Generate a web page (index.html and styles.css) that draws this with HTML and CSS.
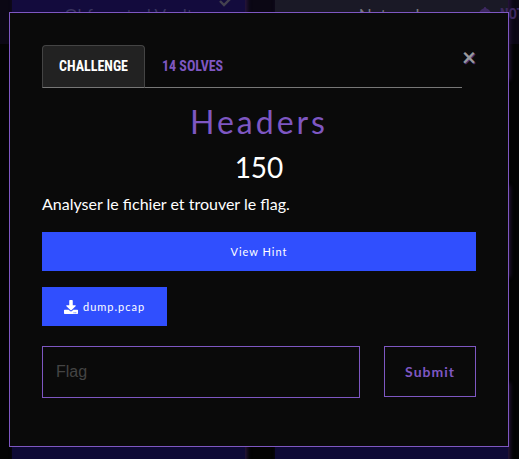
FILE: index.html
```html
<!DOCTYPE html>
<html lang="fr">
<head>
<meta charset="utf-8">
<meta name="viewport" content="width=device-width, initial-scale=1">
<title>Headers</title>
<link rel="stylesheet" href="styles.css">
</head>
<body>
<div class="board" aria-hidden="true">
  <div class="cards">
    <div class="card"><span>Obfuscated Vault</span></div>
    <div class="card card-muted"><span>Network</span></div>
    <div class="card"></div>
    <div class="card"></div>
    <div class="card"></div>
    <div class="card"></div>
  </div>
  <svg class="check" viewBox="0 0 12 8"><path d="M1 2l4 4 6-6" fill="none" stroke="currentColor" stroke-width="2.4"/></svg>
  <div class="notice"><svg viewBox="0 0 12 12"><path d="M5 1a1 1 0 0 1 2 0c2.500 1 4 2.500 4 5v3l1 1H0l1-1V6c0-2.500 1.500-4 4-5z" fill="currentColor"/></svg>NOT</div>
</div>
<main class="modal" role="dialog" aria-labelledby="title">
  <div class="top">
    <nav class="tabs">
      <a class="tab active" href="#challenge">CHALLENGE</a>
      <a class="tab" href="#solves">14 SOLVES</a>
    </nav>
    <button class="close" type="button" aria-label="Close">×</button>
  </div>
  <h1 class="title" id="title">Headers</h1>
  <p class="points">150</p>
  <p class="description">Analyser le fichier et trouver le flag.</p>
  <button class="button hint" type="button">View Hint</button>
  <a class="button file" href="#dump.pcap"><svg class="download" viewBox="0 0 512 512"><path fill="currentColor" d="M216 0h80c13 0 24 11 24 24v168h88c18 0 27 21 14 34L270 378c-7 7-20 7-27 0L90 226c-13-13-4-34 14-34h88V24c0-13 11-24 24-24zm296 376v112c0 13-11 24-24 24H24c-13 0-24-11-24-24V376c0-13 11-24 24-24h147l49 49c20 20 52 20 72 0l49-49h147c13 0 24 11 24 24zm-124 88a20 20 0 1 0-40 0 20 20 0 0 0 40 0zm64 0a20 20 0 1 0-40 0 20 20 0 0 0 40 0z"/></svg>dump.pcap</a>
  <form class="answer">
    <input class="flag" type="text" placeholder="Flag" aria-label="Flag">
    <button class="submit" type="submit">Submit</button>
  </form>
</main>
</body>
</html>
```
FILE: styles.css
```css
* { box-sizing: border-box; }
body {
  margin: 0;
  min-height: 100vh;
  background: #030303;
  color: #fff;
  font-family: Lato, "Liberation Sans", sans-serif;
  font-size: 16px;
  line-height: 24px;
}
.board {
  position: fixed;
  inset: 0;
  overflow: hidden;
  background: linear-gradient(#0b0714 44px, #030303 44px);
}
.cards {
  display: grid;
  grid-template-columns: 1fr 1fr;
  grid-auto-rows: 91px;
  gap: 106px 30px;
  margin: -11px 11px 0 12px;
}
.card {
  padding-top: 15px;
  background: #0e0a35;
  box-shadow: 2px 0 4px #2a1740;
  color: #3a3560;
  font-size: 17px;
  text-align: center;
}
.card:first-child { background: #130b3d; }
.card-muted { background: #1a1926; color: #77777d; }
.check {
  position: absolute;
  left: 219px;
  top: -1px;
  width: 12px;
  height: 8px;
  color: #44424f;
}
.notice {
  position: absolute;
  left: 478px;
  top: 2px;
  display: flex;
  align-items: center;
  gap: 8px;
  color: #3d2861;
  font: bold 14px/24px "Roboto Condensed", Roboto, sans-serif;
}
.notice svg { width: 14px; height: 16px; }
.modal {
  position: relative;
  margin: 12px 10px 12px 9px;
  padding: 32px 32px 48px;
  border: 1px solid #7e57c2;
  background: #0a0a0a;
}
.top { display: flex; align-items: flex-start; }
.tabs {
  display: flex;
  flex: 1;
  border-bottom: 1px solid #777;
}
.tab {
  margin-bottom: -1px;
  padding: 8px 16px;
  border: 1px solid transparent;
  border-radius: 4px 4px 0 0;
  color: #7e57c2;
  font: bold 14px/25px "Roboto Condensed", Roboto, sans-serif;
  text-decoration: none;
}
.tab.active {
  border-color: #444 #444 #777;
  background: #222;
  color: #fff;
}
.close {
  width: 14px;
  padding: 0;
  border: 0;
  background: none;
  color: #999;
  font: bold 24px/24px Lato, sans-serif;
  text-shadow: 1px 1px 0 #4a3278;
}
.title {
  margin: 16px 0 0;
  color: #7e57c2;
  font-size: 32px;
  font-weight: 400;
  line-height: 36px;
  letter-spacing: 3px;
  text-align: center;
}
.points {
  margin: 10px 0 8px;
  font-size: 28px;
  line-height: 34px;
  text-align: center;
}
.description { margin: 0 0 16px; }
.button {
  display: block;
  padding: 10px 22px;
  border: 0;
  background: #304ffe;
  color: #fff;
  font: 11px/19px Lato, sans-serif;
  letter-spacing: 1px;
  text-decoration: none;
}
.hint { width: 100%; margin-bottom: 16px; }
.file {
  display: flex;
  align-items: center;
  gap: 5px;
  width: max-content;
  margin-bottom: 20px;
}
.download { width: 14px; height: 14px; }
.answer { display: flex; align-items: flex-start; gap: 24px; }
.flag {
  flex: 1;
  min-width: 0;
  height: 52px;
  padding: 0 13px;
  border: 1px solid #7e57c2;
  border-radius: 0;
  background: transparent;
  color: #fff;
  font: 16px "Liberation Sans", sans-serif;
}
.flag::placeholder { color: #444; }
.submit {
  height: 51px;
  padding: 0 20px;
  border: 1px solid #7e57c2;
  background: transparent;
  color: #7e57c2;
  font: bold 14px Lato, sans-serif;
  letter-spacing: 1px;
}
```
